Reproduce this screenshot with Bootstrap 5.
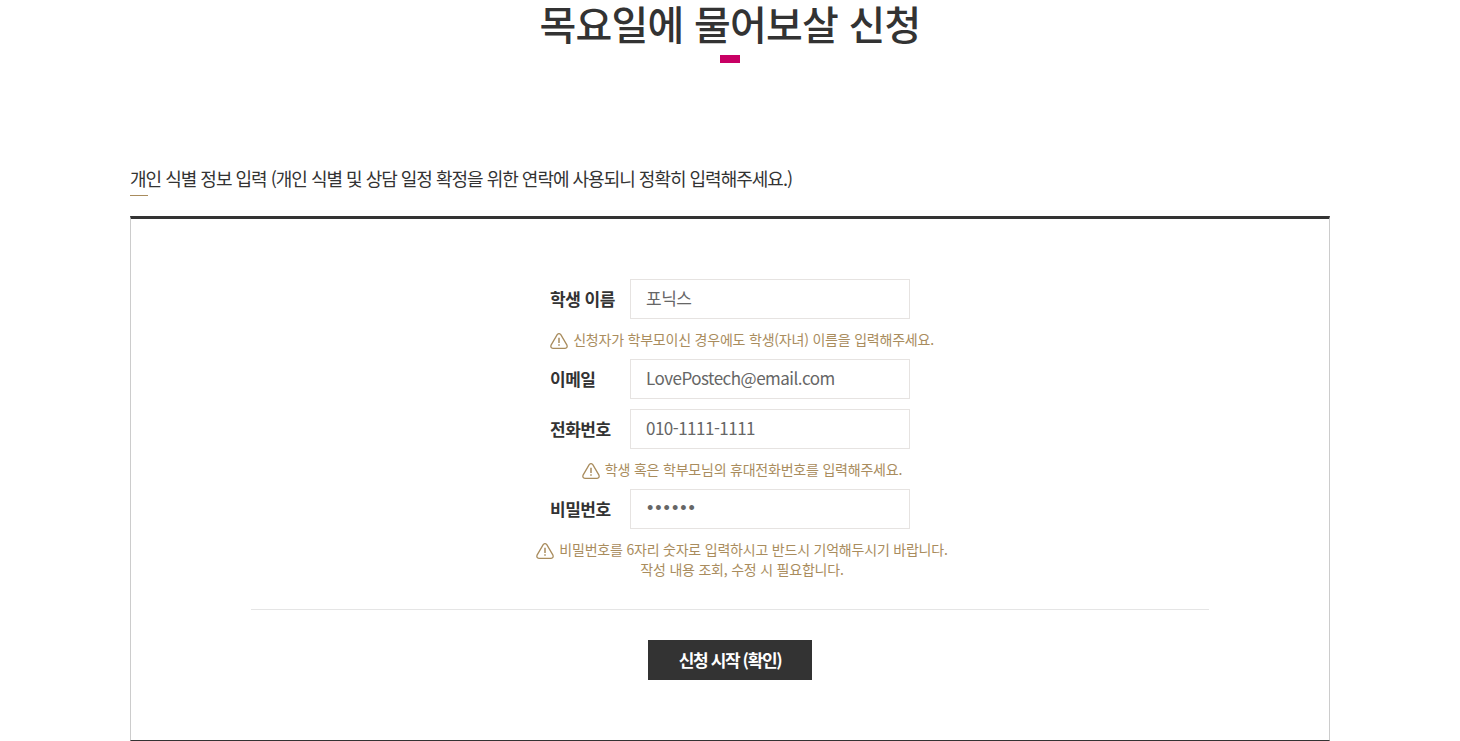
<!DOCTYPE html>
<html lang="ko">
<head>
<meta charset="utf-8">
<meta name="viewport" content="width=device-width, initial-scale=1">
<title>목요일에 물어보살 신청</title>
<link href="https://cdn.jsdelivr.net/npm/bootstrap@5.3.0/dist/css/bootstrap.min.css" rel="stylesheet">
<style>
body { font-family: "Noto Sans CJK KR", "Noto Sans", sans-serif; color: #333; letter-spacing: -0.03em; }
.page { max-width: 1200px; }
.page-title { font-size: 40px; line-height: 46px; font-weight: 500; letter-spacing: -0.02em; }
.page-title::after { content: ""; display: block; width: 20px; height: 8px; margin: 9px auto 0; background: #c80064; }
.section-title { font-size: 18px; line-height: 22px; font-weight: 400; margin: 104px 0 20px; letter-spacing: -1px; }
.section-title::after { content: ""; display: block; width: 18px; height: 1px; margin-top: 6px; background: #a98c5d; }
.panel { border: 1px solid #ccc; border-top: 3px solid #333; border-bottom-color: #333; padding: 60px 10%; }
.fields { max-width: 408px; padding-left: 24px; }
.field-row { max-width: 360px; }
.field-row + .field-row { margin-top: 10px; }
.field-label { width: 80px; font-size: 17px; font-weight: 700; line-height: 40px; }
.field-input, .field-input:focus { height: 40px; padding: 0 15px 4px; border: 1px solid #e6e3e1; border-radius: 0; font-size: 17px; letter-spacing: -0.03em; color: #666; }
.field-input[type="password"] { font-family: "Liberation Sans", sans-serif; font-size: 18px; letter-spacing: 2px; padding: 0 16px 2px; }
.hint { font-size: 14px; line-height: 20px; color: #a98c5d; margin: 10px -20px; letter-spacing: -0.015em; }
.hint-icon { width: 18px; height: 16px; margin: 4px 5px 0 0; }
.divider { border-top: 1px solid #e5e5e5; margin: 30px 0; }
.submit-btn, .submit-btn:hover { width: 164px; height: 40px; border: 0; border-radius: 0; background: #333; color: #fff; font-size: 17px; font-weight: 700; letter-spacing: -0.08em; }
</style>
</head>
<body>
<svg class="d-none" aria-hidden="true">
  <symbol id="warn" viewBox="0 0 18 16">
    <path d="M7.2 1.7Q9 -.4 10.8 1.7L16.8 11.8Q18 15.1 15 15.3H3Q0 15.1 1.2 11.8Z" fill="none" stroke="currentColor" stroke-width="1.3" stroke-linejoin="round"/>
    <path d="M9 4.8V10M9 11.2V12.8" fill="none" stroke="currentColor" stroke-width="1.5"/>
  </symbol>
</svg>
<main class="page mx-auto">
  <h1 class="page-title text-center mb-0">목요일에 물어보살 신청</h1>
  <h2 class="section-title">개인 식별 정보 입력 (개인 식별 및 상담 일정 확정을 위한 연락에 사용되니 정확히 입력해주세요.)</h2>
  <form class="panel">
    <div class="fields mx-auto">
      <div class="field-row d-flex">
        <label class="field-label flex-shrink-0" for="name">학생 이름</label>
        <input class="form-control field-input" id="name" type="text" value="포닉스">
      </div>
      <div class="hint d-flex justify-content-center">
        <svg class="hint-icon flex-shrink-0"><use href="#warn"/></svg>
        <span>신청자가 학부모이신 경우에도 학생(자녀) 이름을 입력해주세요.</span>
      </div>
      <div class="field-row d-flex">
        <label class="field-label flex-shrink-0" for="email">이메일</label>
        <input class="form-control field-input" id="email" type="email" value="LovePostech@email.com">
      </div>
      <div class="field-row d-flex">
        <label class="field-label flex-shrink-0" for="phone">전화번호</label>
        <input class="form-control field-input" id="phone" type="tel" value="010-1111-1111">
      </div>
      <div class="hint d-flex justify-content-center">
        <svg class="hint-icon flex-shrink-0"><use href="#warn"/></svg>
        <span>학생 혹은 학부모님의 휴대전화번호를 입력해주세요.</span>
      </div>
      <div class="field-row d-flex">
        <label class="field-label flex-shrink-0" for="pw">비밀번호</label>
        <input class="form-control field-input" id="pw" type="password" value="111111">
      </div>
      <div class="hint text-center mb-0">
        <div class="d-flex justify-content-center">
          <svg class="hint-icon flex-shrink-0"><use href="#warn"/></svg>
          <span>비밀번호를 6자리 숫자로 입력하시고 반드시 기억해두시기 바랍니다.</span>
        </div>
        <div>작성 내용 조회, 수정 시 필요합니다.</div>
      </div>
    </div>
    <div class="divider"></div>
    <div class="d-flex justify-content-center">
      <button class="btn submit-btn p-0" type="button">신청 시작 (확인)</button>
    </div>
  </form>
</main>
<script src="https://cdn.jsdelivr.net/npm/bootstrap@5.3.0/dist/js/bootstrap.bundle.min.js"></script>
</body>
</html>
